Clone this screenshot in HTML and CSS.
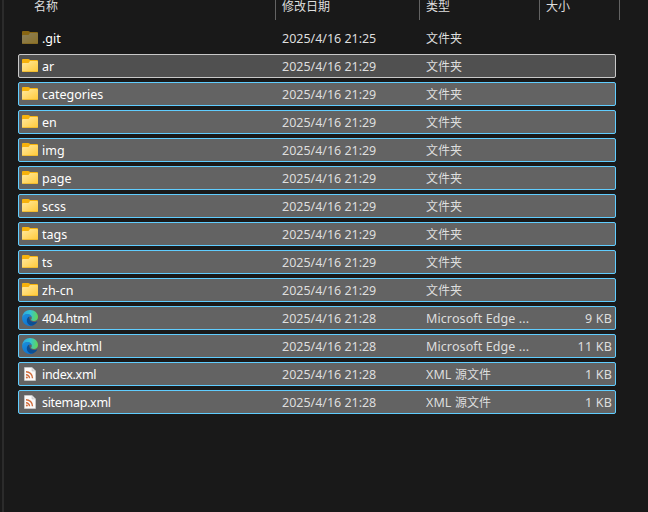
FILE: index.html
```
<!DOCTYPE html>
<html lang="zh-CN">
<head>
<meta charset="utf-8">
<title>文件</title>
<link rel="stylesheet" href="styles.css">
</head>
<body>
<svg class="defs" width="0" height="0">
  <defs>
    <linearGradient id="fold" x1="0" y1="0" x2="1" y2="1"><stop offset="0" stop-color="#ffe9a0"/><stop offset="1" stop-color="#ffc937"/></linearGradient>
    <linearGradient id="edgeTop" x1="0" y1="0.4" x2="1" y2="0.5"><stop offset="0" stop-color="#2aa5e2"/><stop offset="0.5" stop-color="#35c5d3"/><stop offset="1" stop-color="#62d853"/></linearGradient>
    <linearGradient id="edgeLeft" x1="0" y1="0" x2="0.6" y2="1"><stop offset="0" stop-color="#1b8fdc"/><stop offset="1" stop-color="#0f74d0"/></linearGradient>
    <symbol id="folder" viewBox="0 0 16 13"><path d="M0 1Q0 0 1 0H6.3Q7 0 7.500 .5L8 1H15Q16 1 16 2V6H0Z" fill="#f6b20c"/><path d="M0 5Q0 4 1 4H6.500L8 2H15Q16 2 16 3V12Q16 13 15 13H1Q0 13 0 12Z" fill="url(#fold)"/><path d="M.4 12.5H15.6" stroke="#eeb629" stroke-width=".8"/><path d="M8 1.500H15.500" stroke="#636363" stroke-width="0"/></symbol>
    <symbol id="edge" viewBox="0 0 16 16"><path d="M.1 7.5C.5 3.1 3.8 0 8 0c4.8 0 8 3.3 8 6.900 0 2.500-1.800 4-4.100 4-1.900 0-2.700-.7-2.700-1.200 0-.5.600-.8.600-1.900C9.800 5.800 7.900 4.200 5.400 4.200 3 4.200 1 5.500.1 7.500Z" fill="url(#edgeTop)"/><path d="M.1 7.5C1 5.200 3 4.100 5.400 4.100c2.400 0 4.200 1.500 4.400 3.200C9 6.300 7.800 6.200 6.900 6.800 5.100 7.900 5.200 11 6.900 13c1 1.300 2.500 2 4.100 2.400A8 8 0 0 1 .1 7.500Z" fill="url(#edgeLeft)"/><path d="M6.900 6.800C5 7.800 4.300 10.300 5.200 12.400c1 2.300 3.300 3.400 5.800 3 1.700-.6 3.300-1.900 4.200-3.600.2-.4 0-.6-.4-.4-3.400 1.500-7 .1-7.300-2.300-.1-1-.3-1.600-.6-2.300Z" fill="#0c4f94"/></symbol>
    <symbol id="xml" viewBox="0 0 12 14"><path d="M.5 .5H8L11.500 4V13.500H.5Z" fill="#fafafa" stroke="#d4d4d4" stroke-width=".6"/><path d="M8 .5V4H11.500" fill="#e2e2e2" stroke="#bbb" stroke-width=".5"/><g fill="none" stroke="#cf6b3b" stroke-width="1.400"><path d="M2 7.700A3.500 3.500 0 0 1 5.500 11.200M2 4.700A6.500 6.500 0 0 1 8.500 11.200"/></g><circle cx="2.900" cy="10.400" r="1" fill="#cf6b3b"/></symbol>
  </defs>
</svg>
<main class="files">
  <header class="head"><span class="h-name">名称</span><span>修改日期</span><span>类型</span><span>大小</span></header>
  <div class="row plain"><svg class="ic folder dim"><use href="#folder"/></svg><span class="name git">.git</span><span class="date">2025/4/16 21:25</span><span class="type cjk">文件夹</span><span></span></div>
  <div class="row focus"><svg class="ic folder"><use href="#folder"/></svg><span class="name">ar</span><span class="date">2025/4/16 21:29</span><span class="type cjk">文件夹</span><span></span></div>
  <div class="row"><svg class="ic folder"><use href="#folder"/></svg><span class="name">categories</span><span class="date">2025/4/16 21:29</span><span class="type cjk">文件夹</span><span></span></div>
  <div class="row"><svg class="ic folder"><use href="#folder"/></svg><span class="name">en</span><span class="date">2025/4/16 21:29</span><span class="type cjk">文件夹</span><span></span></div>
  <div class="row"><svg class="ic folder"><use href="#folder"/></svg><span class="name">img</span><span class="date">2025/4/16 21:29</span><span class="type cjk">文件夹</span><span></span></div>
  <div class="row"><svg class="ic folder"><use href="#folder"/></svg><span class="name">page</span><span class="date">2025/4/16 21:29</span><span class="type cjk">文件夹</span><span></span></div>
  <div class="row"><svg class="ic folder"><use href="#folder"/></svg><span class="name">scss</span><span class="date">2025/4/16 21:29</span><span class="type cjk">文件夹</span><span></span></div>
  <div class="row"><svg class="ic folder"><use href="#folder"/></svg><span class="name">tags</span><span class="date">2025/4/16 21:29</span><span class="type cjk">文件夹</span><span></span></div>
  <div class="row"><svg class="ic folder"><use href="#folder"/></svg><span class="name">ts</span><span class="date">2025/4/16 21:29</span><span class="type cjk">文件夹</span><span></span></div>
  <div class="row"><svg class="ic folder"><use href="#folder"/></svg><span class="name">zh-cn</span><span class="date">2025/4/16 21:29</span><span class="type cjk">文件夹</span><span></span></div>
  <div class="row"><svg class="ic edge"><use href="#edge"/></svg><span class="name file">404.html</span><span class="date">2025/4/16 21:28</span><span class="type">Microsoft Edge ...</span><span class="size">9 KB</span></div>
  <div class="row"><svg class="ic edge"><use href="#edge"/></svg><span class="name file">index.html</span><span class="date">2025/4/16 21:28</span><span class="type">Microsoft Edge ...</span><span class="size">11 KB</span></div>
  <div class="row"><svg class="ic xml"><use href="#xml"/></svg><span class="name file">index.xml</span><span class="date">2025/4/16 21:28</span><span class="type">XML <span class="cjk">源文件</span></span><span class="size">1 KB</span></div>
  <div class="row"><svg class="ic xml"><use href="#xml"/></svg><span class="name file">sitemap.xml</span><span class="date">2025/4/16 21:28</span><span class="type">XML <span class="cjk">源文件</span></span><span class="size">1 KB</span></div>
</main>
</body>
</html>
```
FILE: styles.css
```
* { box-sizing: border-box; }
body { margin: 0; height: 512px; overflow: hidden; background: #191919; font-family: "Noto Sans", "Noto Sans CJK SC", sans-serif; font-size: 12.5px; color: #dedede; }
.defs { display: block; height: 0; }
.files { height: 512px; margin-left: 2px; border-left: 2px solid #2b2b2b; padding-left: 14px; display: flex; flex-direction: column; gap: 4px; }
.head { display: grid; grid-template-columns: 258px 144px 120px 80px; height: 20px; margin-bottom: 2px; font-size: 12px; line-height: 12px; font-family: "Noto Sans CJK SC", sans-serif; }
.head span { border-right: 1px solid #636363; padding-left: 6px; }
.head .h-name { padding-left: 16px; }
.row { display: grid; grid-template-columns: 22px 241px 144px 116px 1fr; grid-template-rows: 22px; align-items: center; flex: none; width: 598px; height: 24px; padding-right: 3px; background: #636363; border: 1px solid #60cdff; border-radius: 2px; white-space: nowrap; line-height: 20px; }
.plain { background: transparent; border-color: transparent; }
.focus { background: #505050; border-color: #c8c8c8; }
.ic { display: block; margin-left: 3px; }
.folder { width: 16px; height: 13px; margin-top: -1px; }
.dim { opacity: .5; }
.edge { width: 16px; height: 16px; }
.xml { width: 12px; height: 14px; margin-left: 5px; }
.name { color: #fff; padding-left: 1px; }
.name, .date, .type, .size { padding-top: 2px; }
.file { letter-spacing: -.3px; }
.date { letter-spacing: -.02px; }
.type { letter-spacing: .1px; }
.cjk { font-family: "Noto Sans CJK SC", sans-serif; font-size: 12px; letter-spacing: 0; }
.type.cjk { padding-top: 0; line-height: 22px; }
.type .cjk { line-height: 0; margin-left: 0; }
.size { text-align: right; letter-spacing: .2px; }
```
